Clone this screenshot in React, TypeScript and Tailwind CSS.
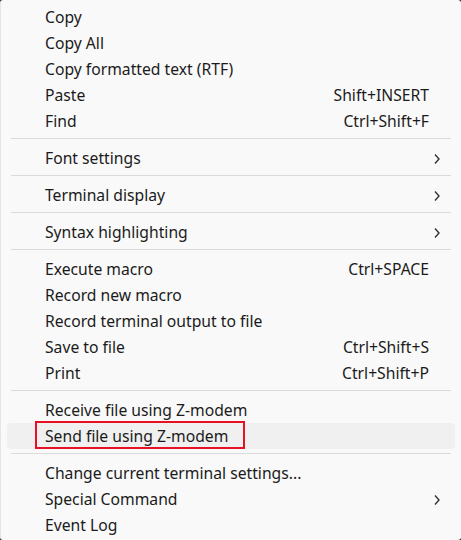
type Item =
  | { kind: "item"; label: string; shortcut?: string; sub?: boolean; active?: boolean }
  | { kind: "sep" };

const items: Item[] = [
  { kind: "item", label: "Copy" },
  { kind: "item", label: "Copy All" },
  { kind: "item", label: "Copy formatted text (RTF)" },
  { kind: "item", label: "Paste", shortcut: "Shift+INSERT" },
  { kind: "item", label: "Find", shortcut: "Ctrl+Shift+F" },
  { kind: "sep" },
  { kind: "item", label: "Font settings", sub: true },
  { kind: "sep" },
  { kind: "item", label: "Terminal display", sub: true },
  { kind: "sep" },
  { kind: "item", label: "Syntax highlighting", sub: true },
  { kind: "sep" },
  { kind: "item", label: "Execute macro", shortcut: "Ctrl+SPACE" },
  { kind: "item", label: "Record new macro" },
  { kind: "item", label: "Record terminal output to file" },
  { kind: "item", label: "Save to file", shortcut: "Ctrl+Shift+S" },
  { kind: "item", label: "Print", shortcut: "Ctrl+Shift+P" },
  { kind: "sep" },
  { kind: "item", label: "Receive file using Z-modem" },
  { kind: "item", label: "Send file using Z-modem", active: true },
  { kind: "sep" },
  { kind: "item", label: "Change current terminal settings..." },
  { kind: "item", label: "Special Command", sub: true },
  { kind: "item", label: "Event Log" },
];

function Chevron() {
  return (
    <svg width="8" height="12" viewBox="0 0 8 12" className="text-[#333] mr-[1px]">
      <path d="M2 1.5 L6 6 L2 10.5" fill="none" stroke="currentColor" strokeWidth="1.4" />
    </svg>
  );
}

export default function App() {
  return (
    <div className="w-[461px] h-[540px] bg-[#202020] overflow-hidden">
      <div
        className="relative w-[461px] h-[540px] bg-[#f9f9f9] rounded-[3px] border-l border-[#e5e5e5] pt-[4px] text-[15.7px] text-[#1b1b1b]"
        style={{ fontFamily: '"Noto Sans", "Open Sans", sans-serif' }}
      >
        {items.map((it, i) =>
          it.kind === "sep" ? (
            <div key={i} className="pt-[4px] pb-[6px] pl-[10px] pr-[10px]">
              <div className="h-px bg-[#dadada]" />
            </div>
          ) : (
            <div
              key={i}
              className={`mx-[6px] h-[26px] pt-[1px] flex items-center pl-[38px] pr-[13px] rounded-[4px] leading-none ${
                it.active ? "bg-[#f0f0f0]" : ""
              }`}
            >
              <span className="flex-1 whitespace-nowrap">{it.label}</span>
              {it.shortcut && <span className="whitespace-nowrap mr-[13px]">{it.shortcut}</span>}
              {it.sub && <Chevron />}
            </div>
          )
        )}
        {/* annotation box */}
        <div className="absolute left-[34px] top-[421px] w-[210px] h-[28px] border-2 border-[#e81123]" />
      </div>
    </div>
  );
}
